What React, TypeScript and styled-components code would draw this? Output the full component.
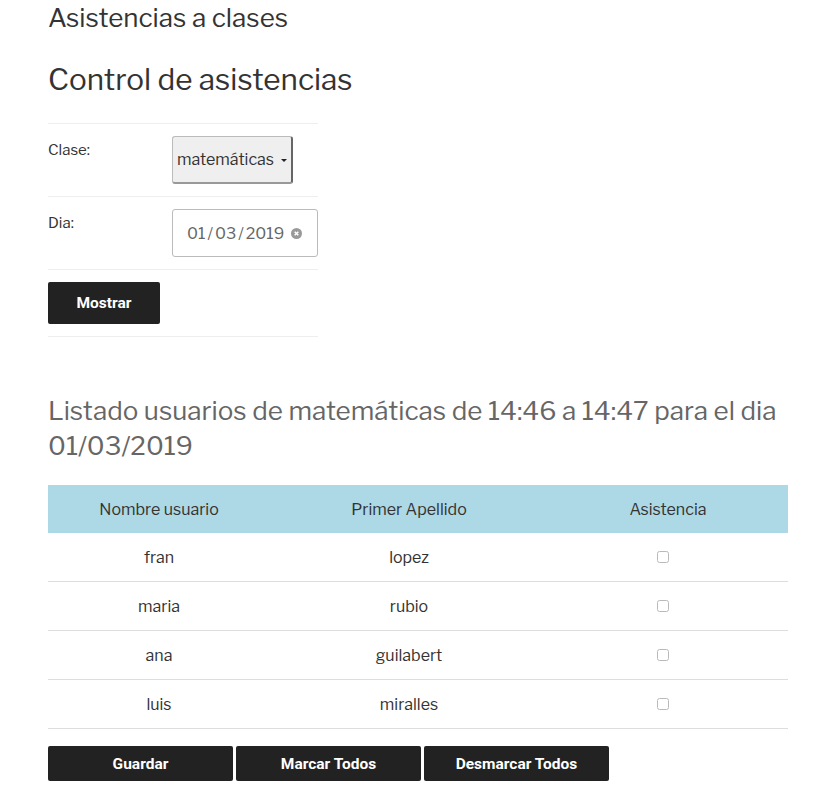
import React from "react";
import styled, { createGlobalStyle } from "styled-components";

const Global = createGlobalStyle`
  html, body { margin: 0; padding: 0; background: #fff; }
  body {
    font-family: "Libre Franklin", "Open Sans", "Liberation Sans", sans-serif;
    color: #333;
    font-size: 16px;
  }
`;

const Page = styled.main`
  padding: 0 43px 0 48px;
  display: flex;
  flex-direction: column;
`;

const PageTitle = styled.h2`
  margin: 4px 0 0;
  font-size: 26px;
  font-weight: 400;
  line-height: 28px;
  color: #333;
`;

const SectionTitle = styled.h1`
  margin: 30px 0 0;
  font-size: 29.7px;
  font-weight: 400;
  line-height: 34px;
  color: #333;
`;

const FormTable = styled.div`
  margin-top: 27px;
  width: 270px;
  border-top: 1px solid #eee;
`;

const FormRow = styled.div`
  display: grid;
  grid-template-columns: 124px 1fr;
  align-items: start;
  padding: 12px 0 12px;
  border-bottom: 1px solid #eee;
`;

const Label = styled.label`
  font-size: 15px;
  line-height: 20px;
  padding-top: 4px;
  color: #333;
`;

const SelectBox = styled.div`
  box-sizing: border-box;
  width: 121px;
  height: 48px;
  background: #efefef;
  border: 1px solid #bbb;
  border-right: 2px solid #666;
  border-bottom: 2px solid #999;
  border-radius: 3px;
  display: flex;
  align-items: center;
  padding: 0 0 0 4px;
  font-size: 16px;
  color: #333;
  gap: 7px;
`;

const Caret = styled.span`
  width: 0;
  height: 0;
  border-left: 3px solid transparent;
  border-right: 3px solid transparent;
  border-top: 3px solid #222;
  margin-top: 1px;
`;

const DateBox = styled.div`
  box-sizing: border-box;
  width: 146px;
  height: 48px;
  border: 1px solid #bbb;
  border-radius: 3px;
  display: flex;
  align-items: center;
  padding-left: 14px;
  font-size: 16px;
  color: #666;
  gap: 4px;
`;

const Slash = styled.span`
  margin: 0 2px;
`;

const ClearIcon = styled.svg`
  width: 11px;
  height: 11px;
  margin-left: 3px;
`;

const DarkButton = styled.button<{ $w?: number; $h?: number }>`
  box-sizing: border-box;
  width: ${(p) => p.$w ?? 112}px;
  height: ${(p) => p.$h ?? 42}px;
  background: #222;
  color: #fff;
  border: none;
  border-radius: 2px;
  font-family: "Roboto", "Liberation Sans", sans-serif;
  font-weight: 700;
  font-size: 15.5px;
  letter-spacing: 0;
  cursor: pointer;
  padding: 0;
`;

const ListTitle = styled.h3`
  margin: 56px 0 0;
  font-size: 26px;
  font-weight: 400;
  line-height: 35px;
  color: #666;
`;

const Table = styled.table`
  margin-top: 22px;
  width: 740px;
  border-collapse: collapse;
  font-size: 16px;
`;

const Th = styled.th<{ $w: number }>`
  width: ${(p) => p.$w}px;
  background: #add8e6;
  height: 48px;
  padding: 0;
  font-weight: 400;
  color: #333;
  text-align: center;
`;

const Td = styled.td`
  height: 48px;
  padding: 0;
  text-align: center;
  border-bottom: 1px solid #ddd;
  color: #333;
`;

const Check = styled.input`
  width: 12px;
  height: 12px;
  margin: 0 10px 0 0;
  vertical-align: 0px;
  opacity: 0.5;
`;

const ButtonBar = styled.div`
  display: flex;
  gap: 3px;
  margin-top: 17px;
`;

const users = [
  ["fran", "lopez"],
  ["maria", "rubio"],
  ["ana", "guilabert"],
  ["luis", "miralles"],
];

export default function App() {
  return (
    <>
      <Global />
      <Page>
        <PageTitle>Asistencias a clases</PageTitle>
        <SectionTitle>Control de asistencias</SectionTitle>
        <FormTable>
          <FormRow>
            <Label>Clase:</Label>
            <SelectBox>
              matemáticas<Caret />
            </SelectBox>
          </FormRow>
          <FormRow>
            <Label>Dia:</Label>
            <DateBox>
              <span>
                01<Slash>/</Slash>03<Slash>/</Slash>2019
              </span>
              <ClearIcon viewBox="0 0 12 12">
                <circle cx="6" cy="6" r="6" fill="#999" />
                <path d="M4 4 L8 8 M8 4 L4 8" stroke="#fff" strokeWidth="1.6" />
              </ClearIcon>
            </DateBox>
          </FormRow>
          <FormRow>
            <DarkButton>Mostrar</DarkButton>
          </FormRow>
        </FormTable>
        <ListTitle>
          Listado usuarios de matemáticas de 14:46 a 14:47 para el dia 01/03/2019
        </ListTitle>
        <Table>
          <thead>
            <tr>
              <Th $w={222}>Nombre usuario</Th>
              <Th $w={278}>Primer Apellido</Th>
              <Th $w={240}>Asistencia</Th>
            </tr>
          </thead>
          <tbody>
            {users.map(([n, a]) => (
              <tr key={n}>
                <Td>{n}</Td>
                <Td>{a}</Td>
                <Td>
                  <Check type="checkbox" />
                </Td>
              </tr>
            ))}
          </tbody>
        </Table>
        <ButtonBar>
          <DarkButton $w={185} $h={35}>Guardar</DarkButton>
          <DarkButton $w={185} $h={35}>Marcar Todos</DarkButton>
          <DarkButton $w={185} $h={35}>Desmarcar Todos</DarkButton>
        </ButtonBar>
      </Page>
    </>
  );
}
